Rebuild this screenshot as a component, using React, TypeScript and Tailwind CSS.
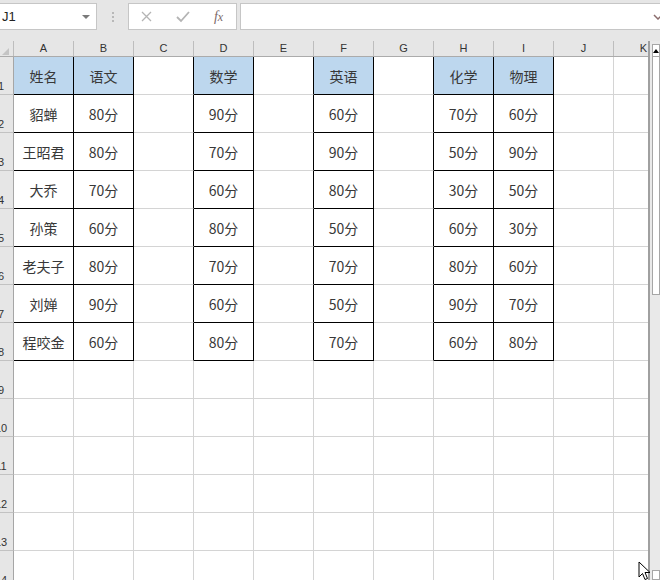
import React from "react";

const COLS = ["A", "B", "C", "D", "E", "F", "G", "H", "I", "J"];

// column index -> values for rows 1..8
const DATA: Record<number, string[]> = {
  0: ["姓名", "貂蝉", "王昭君", "大乔", "孙策", "老夫子", "刘婵", "程咬金"],
  1: ["语文", "80分", "80分", "70分", "60分", "80分", "90分", "60分"],
  3: ["数学", "90分", "70分", "60分", "80分", "70分", "60分", "80分"],
  5: ["英语", "60分", "90分", "80分", "50分", "70分", "50分", "70分"],
  7: ["化学", "70分", "50分", "30分", "60分", "80分", "90分", "60分"],
  8: ["物理", "60分", "90分", "50分", "30分", "60分", "70分", "80分"],
};

const ROWS = Array.from({ length: 14 }, (_, i) => i + 1);

const Cell = ({ col, row }: { col: number; row: number }) => {
  const inTable = row <= 8 && DATA[col] !== undefined;
  const nextInTable = row <= 8 && DATA[col + 1] !== undefined;
  const isHead = inTable && row === 1;
  const right = inTable || nextInTable ? "border-r-black" : "border-r-[#d4d4d4]";
  const bottom = inTable ? "border-b-black" : "border-b-[#d4d4d4]";
  return (
    <div
      className={`w-[60px] h-[38px] shrink-0 border-r border-b flex items-center justify-center pt-[1px] text-[14px] text-[#383838] ${right} ${bottom} ${
        isHead ? "bg-[#bdd7ee]" : "bg-white"
      }`}
    >
      {inTable ? DATA[col][row - 1] : ""}
    </div>
  );
};

export default function App() {
  return (
    <div
      className="relative w-[660px] h-[580px] overflow-hidden bg-[#e6e6e6]"
      style={{ fontFamily: '"Noto Sans CJK SC", "Noto Sans", sans-serif' }}
    >
      {/* formula bar */}
      <div className="h-[41px] flex items-start pt-[3px]">
        <div className="w-[97px] h-[27px] shrink-0 bg-white border border-l-0 border-[#c6c6c6] flex items-center justify-between pl-[2px] pr-[6px]">
          <span className="text-[13px] text-[#222]" style={{ fontFamily: '"Liberation Sans", sans-serif' }}>J1</span>
          <span className="w-0 h-0 border-l-[4px] border-r-[4px] border-t-[4px] border-l-transparent border-r-transparent border-t-[#7a7a7a]" />
        </div>
        <div className="w-[31px] h-[27px] shrink-0 flex flex-col items-center justify-center gap-[2px]">
          <span className="w-[2px] h-[2px] bg-[#b8b8b8]" />
          <span className="w-[2px] h-[2px] bg-[#b8b8b8]" />
          <span className="w-[2px] h-[2px] bg-[#b8b8b8]" />
        </div>
        <div className="w-[109px] h-[27px] shrink-0 bg-white border border-[#c6c6c6] flex items-center">
          <svg width="36" height="27" viewBox="0 0 36 27" className="shrink-0">
            <path d="M13 9 L22 18 M22 9 L13 18" stroke="#b4b4b4" strokeWidth="1.3" fill="none" />
          </svg>
          <svg width="36" height="27" viewBox="0 0 36 27" className="shrink-0">
            <path d="M12 14 L16 18 L24 9" stroke="#b4b4b4" strokeWidth="1.8" fill="none" />
          </svg>
          <span
            className="w-[36px] text-center text-[14px] italic text-[#7c6a6a]"
            style={{ fontFamily: '"Liberation Serif", serif' }}
          >
            f<span className="text-[12px]">x</span>
          </span>
        </div>
        <div className="ml-[3px] w-[430px] h-[27px] shrink-0 bg-white border border-[#c6c6c6] flex items-center">
          <svg width="10" height="6" viewBox="0 0 10 6" className="ml-[412px]">
            <path d="M1 1 L5 5 L9 1" stroke="#8a6c6c" strokeWidth="1.5" fill="none" />
          </svg>
        </div>
      </div>

      <div className="flex">
        {/* sheet */}
        <div className="w-[648px] shrink-0 overflow-hidden">
          {/* column header */}
          <div className="flex h-[16px] border-b border-[#ababab]" style={{ fontFamily: '"Liberation Sans", sans-serif' }}>
            <div className="w-[14px] shrink-0 border-r border-[#bdbdbd] flex items-end justify-end pr-[4px] pb-[1px]">
              <span className="w-0 h-0 border-l-[7px] border-b-[7px] border-l-transparent border-b-[#c4c4c4]" />
            </div>
            {COLS.map((c) => (
              <div key={c} className="w-[60px] shrink-0 border-r border-[#bdbdbd] flex items-center justify-center text-[11px] text-[#333]">
                {c}
              </div>
            ))}
            <div className="w-[35px] shrink-0 flex items-center justify-end pr-[2px] text-[11px] text-[#333]">K</div>
          </div>

          {ROWS.map((r) => (
            <div key={r} className="flex">
              <div className="w-[14px] h-[38px] shrink-0 overflow-hidden bg-[#e6e6e6] border-r border-r-[#a6a6a6] border-b border-b-[#c2c2c2] flex items-end pb-[1px]">
                <div
                  className="w-[26px] -ml-[12px] shrink-0 text-center text-[11px] leading-[13px] text-[#333]"
                  style={{ fontFamily: '"Liberation Sans", sans-serif' }}
                >
                  {r}
                </div>
              </div>
              {COLS.map((_, ci) => (
                <Cell key={ci} col={ci} row={r} />
              ))}
              <div className="w-[35px] h-[38px] shrink-0 bg-white border-b border-[#d4d4d4]" />
            </div>
          ))}
        </div>

        {/* vertical scrollbar */}
        <div className="w-[12px] h-[539px] shrink-0 border-l-2 border-[#a0a0a0] bg-[#e9e9e9] pl-[2px] pt-[3px] flex flex-col">
          <div className="h-[13px] bg-white border border-[#a6a6a6] flex items-center justify-center">
            <span className="w-0 h-0 border-l-[3px] border-r-[3px] border-b-[4px] border-l-transparent border-r-transparent border-b-black" />
          </div>
          <div className="h-[238px] bg-white border border-t-0 border-[#a6a6a6]" />
          <div className="flex-1" />
          <div className="h-[10px] bg-white border border-[#a6a6a6]" />
        </div>
      </div>

      {/* mouse pointer */}
      <svg width="14" height="20" viewBox="0 0 14 20" className="absolute left-[638px] top-[561px]">
        <path d="M1 1 L1 16 L4.5 12.5 L7 18.5 L9.5 17.5 L7 11.5 L12 11.5 Z" fill="white" stroke="black" strokeWidth="1" strokeLinejoin="round" />
      </svg>
    </div>
  );
}
